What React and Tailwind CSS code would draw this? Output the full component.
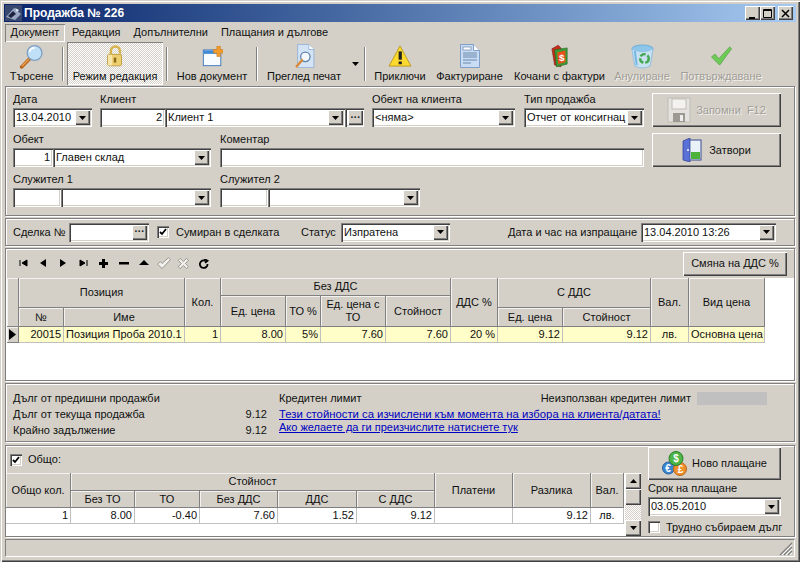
import React from "react";

const sunken = "bg-white shadow-[inset_1px_1px_0_#808080,inset_2px_2px_0_#404040,inset_-1px_-1px_0_#fff,inset_-2px_-2px_0_#d4d0c8]";
const raised = "bg-[#d4d0c8] shadow-[inset_1px_1px_0_#fff,inset_-1px_-1px_0_#404040,inset_-2px_-2px_0_#808080]";
const panel = "mx-[1px] border border-[#808080] shadow-[inset_1px_1px_0_#fff,1px_1px_0_#fff]";
const head = "flex items-center justify-center text-center leading-[13px] border-r border-b border-[#808080] shadow-[inset_1px_1px_0_#f4f2ee] bg-[#d4d0c8]";
const dither = "bg-[repeating-conic-gradient(#fff_0_25%,#d4d0c8_0_50%)] bg-[length:2px_2px]";

function Arrow() {
  return (
    <span className={`${raised} flex items-center justify-center shrink-0 w-[15px] h-[15px]`}>
      <svg width="7" height="4" viewBox="0 0 7 4"><path d="M0 0h7L3.500 4z" fill="#000" /></svg>
    </span>
  );
}

function Field({ w, text, right, arrow, dots, className = "" }) {
  return (
    <div className={`${sunken} h-[19px] flex items-center pl-[3px] pr-[2px] shrink-0 ${className}`} style={{ width: w }}>
      <span className={`flex-1 whitespace-nowrap overflow-hidden ${right ? "text-right pr-[1px]" : ""}`}>{text}</span>
      {arrow && <Arrow />}
      {dots && <span className={`${raised} w-[15px] h-[15px] flex items-center justify-center font-bold leading-[8px] text-[10px] shrink-0`}>···</span>}
    </div>
  );
}

function Label({ children }) {
  return <div className="h-[18px] leading-[18px] whitespace-nowrap">{children}</div>;
}

function Check({ on }) {
  return (
    <span className={`${sunken} w-[12px] h-[12px] flex items-center justify-center shrink-0`}>
      {on && <svg width="8" height="8" viewBox="0 0 8 8"><path d="M1 4l2 2 4-5" stroke="#000" strokeWidth="1.800" fill="none" /></svg>}
    </span>
  );
}

const Icons = {
  search: (
    <svg width="26" height="25" viewBox="0 0 30 28">
      <path d="M3 26l9-9" stroke="#b8651e" strokeWidth="4" strokeLinecap="round" />
      <path d="M3.500 25l8-8" stroke="#f3a653" strokeWidth="1.500" />
      <circle cx="18" cy="10" r="8.500" fill="#bfe0f7" stroke="#7f9fc2" strokeWidth="1.500" />
      <path d="M12 9a6 6 0 0 1 6-5" stroke="#fff" strokeWidth="2" fill="none" />
    </svg>
  ),
  lock: (
    <svg width="18" height="22" viewBox="0 0 22 26">
      <path d="M6 13V7a5.500 5.500 0 0 1 11 0v3" stroke="#d8b24a" strokeWidth="3" fill="none" />
      <rect x="2" y="11" width="17" height="14" rx="2" fill="#efce6e" stroke="#b8953a" />
      <rect x="2.500" y="11.500" width="5" height="13" fill="#f8e6a8" />
      <rect x="9.500" y="15" width="3" height="6" fill="#8a6a1c" />
    </svg>
  ),
  doc: (
    <svg width="21" height="21" viewBox="0 0 24 24">
      <rect x="1.500" y="4.500" width="20" height="18" fill="#f8fcff" stroke="#2f6fb5" />
      <rect x="2" y="5" width="19" height="4" fill="#3f8ad6" />
      <path d="M13 4h4V0h4v4h3v4h-3v4h-4V8h-4z" fill="#f39c2c" stroke="#c9761a" strokeWidth=".6" />
    </svg>
  ),
  preview: (
    <svg width="21" height="24" viewBox="0 0 24 28">
      <path d="M4 .5h13l6 6v21H4z" fill="#d5e4f5" stroke="#8fb0d6" />
      <path d="M17 .5v6h6" fill="#fff" stroke="#8fb0d6" />
      <circle cx="13" cy="15" r="5.500" fill="#f2f8fe" stroke="#5d83ac" strokeWidth="1.500" />
      <path d="M9 19l-6 7" stroke="#d98a3a" strokeWidth="3" strokeLinecap="round" />
    </svg>
  ),
  warn: (
    <svg width="24" height="22" viewBox="0 0 26 24">
      <path d="M13 1L25 23H1z" fill="#fbd92e" stroke="#b99a1c" strokeLinejoin="round" />
      <rect x="11.500" y="7" width="3.500" height="9" fill="#222" />
      <rect x="11.500" y="18" width="3.500" height="3" fill="#222" />
    </svg>
  ),
  invoice: (
    <svg width="20" height="24" viewBox="0 0 20 24">
      <path d="M.5.5h13l6 6v17H.5z" fill="#c8dcf3" stroke="#7f9fc8" />
      <path d="M13.500.5v6h6" fill="#fff" stroke="#7f9fc8" />
      <rect x="3" y="3" width="8" height="3" fill="#fff" stroke="#54739c" strokeWidth=".6" />
      <path d="M3 9h14M3 11h14M3 13h14M3 16h14M3 19h8" stroke="#54739c" strokeWidth=".8" />
    </svg>
  ),
  books: (
    <svg width="18" height="24" viewBox="0 0 20 26">
      <path d="M1 5l7-4 3 3v21l-7-2z" fill="#c92b1c" stroke="#6d150c" strokeWidth=".6" />
      <path d="M4 6l14-2v18L6 25z" fill="#3c9a35" stroke="#1d5a1a" strokeWidth=".6" />
      <path d="M7 9l9-2v13l-8 2z" fill="#e6511c" />
      <text x="12" y="19" fontSize="11" fontWeight="700" fill="#fff" textAnchor="middle" fontFamily="Liberation Sans">$</text>
    </svg>
  ),
  bin: (
    <svg width="23" height="25" viewBox="0 0 24 26">
      <ellipse cx="12" cy="5" rx="11" ry="4" fill="#7cc4f2" stroke="#4ea3e0" />
      <path d="M1 5l3 18q8 4 16 0l3-18q-11 6-22 0z" fill="#c4e6fa" stroke="#7cbcea" />
      <path d="M4 7l2 15" stroke="#5cb0ec" strokeWidth="2" />
      <circle cx="14" cy="15" r="4.500" fill="none" stroke="#1f9e30" strokeWidth="2.500" strokeDasharray="6 2" />
    </svg>
  ),
  ok: (
    <svg width="23" height="20" viewBox="0 0 24 22">
      <path d="M1 12l4-3 4 5L21 1l2 2L10 21z" fill="#55cc3a" stroke="#2e9420" strokeWidth=".8" strokeLinejoin="round" />
    </svg>
  ),
  floppy: (
    <svg width="24" height="26" viewBox="0 0 24 26">
      <path d="M1 1h22v24H1z" fill="#e4e2de" stroke="#c0bdb6" />
      <rect x="5" y="2" width="14" height="10" fill="#f3f2f0" stroke="#c0bdb6" />
      <rect x="6" y="16" width="12" height="9" fill="#9d9a94" />
      <rect x="13" y="18" width="3" height="6" fill="#eee" />
    </svg>
  ),
  door: (
    <svg width="20" height="24" viewBox="0 0 20 24">
      <rect x="6" y="2" width="13" height="20" fill="#e8f2f8" stroke="#3a4a8f" />
      <rect x="9" y="14" width="9" height="7" fill="#4cb23a" />
      <path d="M1 3l7-3v24l-7-2z" fill="#5a72d8" stroke="#2c3a8e" strokeWidth=".7" />
      <circle cx="6" cy="12" r="1" fill="#fff" />
    </svg>
  ),
  coins: (
    <svg width="25" height="25" viewBox="0 0 25 25" fontFamily="Liberation Sans" fontWeight="700" fontSize="10" textAnchor="middle">
      <circle cx="6.500" cy="17" r="6" fill="#3c86d0" stroke="#2a5fa0" />
      <text x="6" y="21" fill="#fff">€</text>
      <circle cx="18" cy="18" r="6.500" fill="#f0902c" stroke="#b7651a" />
      <text x="18.500" y="22" fill="#fff">£</text>
      <circle cx="14" cy="7.500" r="7" fill="#4db548" stroke="#2a7f2a" />
      <text x="14" y="11" fill="#fff">$</text>
    </svg>
  ),
};

function Tool({ w, icon, text, disabled, pressed }) {
  return (
    <div
      className={`shrink-0 flex flex-col items-center justify-end h-[43px] pb-[2px] ${disabled ? "text-[#a09d96] [text-shadow:1px_1px_0_#f4f2ee]" : ""} ${pressed ? `shadow-[inset_1px_1px_0_#808080,inset_-1px_-1px_0_#fff] ${dither}` : ""}`}
      style={{ width: w }}
    >
      <div className={`h-[28px] flex items-center justify-center ${disabled ? "opacity-80" : ""}`}>{icon}</div>
      <span className="leading-[13px] whitespace-nowrap">{text}</span>
    </div>
  );
}

function Sep() {
  return <div className="shrink-0 w-[2px] h-[34px] bg-[#808080] border-r border-white self-center" />;
}

const nav = [
  <path d="M1 1v6M8 1v6L3 4z" stroke="#000" fill="#000" />,
  <path d="M7 0v8L1 4z" fill="#000" />,
  <path d="M1 0v8l6-4z" fill="#000" />,
  <path d="M1 1v6l5-3zM8 1v6" stroke="#000" fill="#000" />,
  <path d="M3 0h3v3h3v3H6v3H3V6H0V3h3z" fill="#000" />,
  <path d="M0 3h10v2.500H0z" fill="#000" />,
  <path d="M5 1l5 5H0z" fill="#000" />,
  <path d="M.5 5.500l2-2 1.500 1.500L9 .5l1.500 1.500L4 9z" stroke="#8f8c85" strokeWidth=".7" fill="#f4f2ee" />,
  <path d="M1 2.500L2.500 1 5 3.500 7.500 1 9 2.500 6.500 5 9 7.500 7.500 9 5 6.500 2.500 9 1 7.500 3.500 5z" stroke="#8f8c85" strokeWidth=".7" fill="#f4f2ee" />,
  <path d="M8.500 5A3.800 3.800 0 1 1 6.500 1.800M5.500 0l3 1.800-2.500 2" stroke="#000" strokeWidth="1.800" fill="none" />,
];

function Cell({ children, right, center, className = "" }) {
  return (
    <div className={`border-r border-b border-[#c0c0c0] flex items-center whitespace-nowrap overflow-hidden px-[2px] ${right ? "justify-end" : center ? "justify-center" : ""} ${className}`}>
      {children}
    </div>
  );
}

export default function App() {
  const rowBg = "bg-[#fffdc8]";
  return (
    <div className="w-[800px] h-[562px] overflow-hidden bg-[#d4d0c8] p-[4px] flex flex-col text-[11px] text-[#101010] shadow-[inset_1px_1px_0_#d4d0c8,inset_2px_2px_0_#fff,inset_-1px_-1px_0_#404040,inset_-2px_-2px_0_#808080] font-['Liberation_Sans',sans-serif]">
      {/* title */}
      <div className="h-[18px] shrink-0 flex items-center bg-gradient-to-r from-[#0a246a] to-[#a6caf0] pl-[1px] pr-[3px]">
        <svg width="17" height="16" viewBox="0 0 17 16" className="shrink-0">
          <rect width="17" height="16" fill="#39466e" />
          <path d="M1 12L9 3l7 6-6 6z" fill="#9aa7c4" />
          <path d="M3 11l5-5 3 3-5 4z" fill="#1e2440" />
          <path d="M10 3l4 2-2 2z" fill="#e8edf5" />
        </svg>
        <span className="ml-[2px] text-white font-bold text-[12px] whitespace-nowrap">Продажба № 226</span>
        <div className="ml-auto flex">
          {[
            <path d="M2 9h6v2H2z" fill="#000" />,
            <path d="M1.500 1.500h8v8h-8zM1 2.500h9" stroke="#000" fill="none" />,
            <path d="M2 2l7 7M9 2l-7 7" stroke="#000" strokeWidth="1.500" />,
          ].map((p, i) => (
            <span key={i} className={`${raised} w-[15px] h-[14px] flex items-center justify-center ${i === 2 ? "ml-[3px]" : ""}`}>
              <svg width="11" height="11" viewBox="0 0 11 11">{p}</svg>
            </span>
          ))}
        </div>
      </div>
      {/* menu */}
      <div className="h-[19px] mt-[1px] shrink-0 flex items-center pl-[1px]">
        <span className="h-[18px] w-[60px] flex items-center justify-center shadow-[inset_1px_1px_0_#808080,inset_-1px_-1px_0_#fff]">Документ</span>
        <span className="ml-[7px]">Редакция</span>
        <span className="ml-[13px]">Допълнителни</span>
        <span className="ml-[13px]">Плащания и дългове</span>
      </div>
      {/* toolbar */}
      <div className="h-[43px] shrink-0 flex items-center pl-[4px]">
        <Tool w={47} icon={Icons.search} text="Търсене" />
        <div className="w-[7px]" /><Sep /><div className="w-[3px]" />
        <Tool w={96} icon={Icons.lock} text="Режим редакция" pressed />
        <div className="w-[3px]" /><Sep /><div className="w-[8px]" />
        <Tool w={72} icon={Icons.doc} text="Нов документ" />
        <div className="w-[8px]" /><Sep /><div className="w-[8px]" />
        <Tool w={76} icon={Icons.preview} text="Преглед печат" />
        <span className="ml-[9px] mt-[1px] w-[8px] flex justify-center shrink-0">
          <svg width="7" height="4" viewBox="0 0 7 4"><path d="M0 0h7L3.500 4z" fill="#000" /></svg>
        </span>
        <div className="w-[5px]" /><Sep /><div className="w-[6px]" />
        <Tool w={56} icon={Icons.warn} text="Приключи" />
        <div className="w-[6px]" />
        <Tool w={71} icon={Icons.invoice} text="Фактуриране" />
        <div className="w-[8px]" />
        <Tool w={93} icon={Icons.books} text="Кочани с фактури" />
        <div className="w-[8px]" />
        <Tool w={56} icon={Icons.bin} text="Анулиране" disabled />
        <div className="w-[9px]" />
        <Tool w={84} icon={Icons.ok} text="Потвърждаване" disabled />
      </div>
      {/* form */}
      <div className={`${panel} mt-[1px] h-[130px] shrink-0 flex pl-[7px] pt-[3px]`}>
        <div className="w-[631px] shrink-0 flex flex-col gap-[3px]">
          <div className="flex">
            <div><Label>Дата</Label><Field w={79} text="13.04.2010" arrow /></div>
            <div className="ml-[8px]">
              <Label>Клиент</Label>
              <div className="flex">
                <Field w={65} text="2" right />
                <Field w={180} text="Клиент 1" arrow />
                <Field w={19} dots className="pl-[2px]" />
              </div>
            </div>
            <div className="ml-[8px]"><Label>Обект на клиента</Label><Field w={143} text="<няма>" arrow /></div>
            <div className="ml-[9px]"><Label>Тип продажба</Label><Field w={120} text="Отчет от консигнац" arrow /></div>
          </div>
          <div className="flex">
            <div>
              <Label>Обект</Label>
              <div className="flex"><Field w={40} text="1" right /><Field w={158} text="Главен склад" arrow /></div>
            </div>
            <div className="ml-[9px]"><Label>Коментар</Label><Field w={424} text="" /></div>
          </div>
          <div className="flex">
            <div>
              <Label>Служител 1</Label>
              <div className="flex"><Field w={48} text="" /><Field w={150} text="" arrow /></div>
            </div>
            <div className="ml-[9px]">
              <Label>Служител 2</Label>
              <div className="flex"><Field w={48} text="" /><Field w={152} text="" arrow /></div>
            </div>
          </div>
        </div>
        <div className="ml-[8px] pt-[3px] flex flex-col gap-[6px]">
          <div className={`${raised} w-[129px] h-[34px] flex items-center justify-center gap-[5px] text-[#a09d96] [text-shadow:1px_1px_0_#f4f2ee]`}>
            {Icons.floppy}<span>Запомни&nbsp; F12</span>
          </div>
          <div className={`${raised} w-[129px] h-[34px] flex items-center justify-center gap-[7px]`}>
            {Icons.door}<span>Затвори</span>
          </div>
        </div>
      </div>
      {/* deal row */}
      <div className={`${panel} mt-[2px] h-[28px] shrink-0 flex items-center pl-[7px]`}>
        <span className="w-[56px] whitespace-nowrap">Сделка №</span>
        <Field w={80} text="" dots />
        <span className="ml-[8px]"><Check on /></span>
        <span className="ml-[7px] whitespace-nowrap w-[125px]">Сумиран в сделката</span>
        <span className="whitespace-nowrap w-[40px]">Статус</span>
        <Field w={109} text="Изпратена" arrow />
        <span className="ml-[58px] whitespace-nowrap w-[133px]">Дата и час на изпращане</span>
        <Field w={135} text="13.04.2010 13:26" arrow />
      </div>
      {/* grid panel */}
      <div className={`${panel} mt-[2px] h-[133px] shrink-0 flex flex-col`}>
        <div className="h-[29px] shrink-0 flex items-center pl-[8px] pr-[7px]">
          {nav.map((p, i) => (
            <span key={i} className="w-[20px] flex justify-center">
              {i === 7 || i === 8 ? (
                <svg width="14" height="13" viewBox="0 0 11 10">{p}</svg>
              ) : (
                <svg width="11" height="10" viewBox="0 0 11 10">{p}</svg>
              )}
            </span>
          ))}
          <span className={`${raised} ml-auto w-[104px] h-[24px] flex items-center justify-center whitespace-nowrap`}>Смяна на ДДС %</span>
        </div>
        <div className="flex-1 bg-white overflow-hidden">
          <div className="grid w-max grid-cols-[12px_45px_121px_36px_65px_35px_65px_65px_47px_65px_88px_38px_76px] grid-rows-[18px_12px_19px_16px] ml-[1px]">
            <div className={`${head} col-[1] row-[1/4]`} />
            <div className={`${head} col-[2/4] row-[1/3]`}>Позиция</div>
            <div className={`${head} col-[2] row-[3]`}>№</div>
            <div className={`${head} col-[3] row-[3]`}>Име</div>
            <div className={`${head} col-[4] row-[1/4]`}>Кол.</div>
            <div className={`${head} col-[5/9] row-[1]`}>Без ДДС</div>
            <div className={`${head} col-[5] row-[2/4]`}>Ед. цена</div>
            <div className={`${head} col-[6] row-[2/4]`}>ТО %</div>
            <div className={`${head} col-[7] row-[2/4]`}>Ед. цена с<br />ТО</div>
            <div className={`${head} col-[8] row-[2/4]`}>Стойност</div>
            <div className={`${head} col-[9] row-[1/4]`}>ДДС %</div>
            <div className={`${head} col-[10/12] row-[1/3]`}>С ДДС</div>
            <div className={`${head} col-[10] row-[3]`}>Ед. цена</div>
            <div className={`${head} col-[11] row-[3]`}>Стойност</div>
            <div className={`${head} col-[12] row-[1/4]`}>Вал.</div>
            <div className={`${head} col-[13] row-[1/4]`}>Вид цена</div>
            <div className={`${head} col-[1] row-[4]`}>
              <svg width="7" height="11" viewBox="0 0 7 11"><path d="M0 0l7 5.500L0 11z" fill="#000" /></svg>
            </div>
            <Cell right className={rowBg}>20015</Cell>
            <Cell className={rowBg}>Позиция Проба 2010.1</Cell>
            <Cell right className={rowBg}>1</Cell>
            <Cell right className={rowBg}>8.00</Cell>
            <Cell right className={rowBg}>5%</Cell>
            <Cell right className={rowBg}>7.60</Cell>
            <Cell right className={rowBg}>7.60</Cell>
            <Cell right className={rowBg}>20 %</Cell>
            <Cell right className={rowBg}>9.12</Cell>
            <Cell right className={rowBg}>9.12</Cell>
            <Cell center className={rowBg}>лв.</Cell>
            <Cell className={rowBg}>Основна цена</Cell>
          </div>
        </div>
      </div>
      {/* debt */}
      <div className={`${panel} mt-[2px] h-[59px] shrink-0 flex pl-[7px] pt-[6px]`}>
        <div className="w-[254px] shrink-0 grid grid-cols-[1fr_auto] auto-rows-[16px] items-center">
          <span>Дълг от предишни продажби</span><span />
          <span>Дълг от текуща продажба</span><span>9.12</span>
          <span>Крайно задължение</span><span>9.12</span>
        </div>
        <div className="ml-[12px] flex-1 flex flex-col">
          <div className="h-[16px] flex items-center">
            <span>Кредитен лимит</span>
            <span className="ml-auto whitespace-nowrap">Неизползван кредитен лимит</span>
            <span className="ml-[6px] mr-[27px] w-[70px] h-[13px] bg-[#c0c0c0]" />
          </div>
          <a className="h-[14px] leading-[14px] mt-[1px] text-[11.300px] text-[#0000c0] underline whitespace-nowrap">Тези стойности са изчислени към момента на избора на клиента/датата!</a>
          <a className="h-[13px] leading-[13px] text-[#0000c0] underline whitespace-nowrap">Ако желаете да ги преизчислите натиснете тук</a>
        </div>
      </div>
      {/* totals */}
      <div className={`${panel} mt-[3px] h-[92px] shrink-0 flex`}>
        <div className="w-[636px] shrink-0 flex flex-col">
          <div className="h-[27px] shrink-0 flex items-center pl-[4px]">
            <Check on />
            <span className="ml-[6px]">Общо:</span>
          </div>
          <div className="flex">
            <div className="w-[619px] h-[63px] bg-white shrink-0">
              <div className="grid grid-cols-[65px_64px_65px_78px_79px_78px_78px_78px_33px] grid-rows-[18px_17px_16px]">
                <div className={`${head} col-[1] row-[1/3]`}>Общо кол.</div>
                <div className={`${head} col-[2/7] row-[1]`}>Стойност</div>
                <div className={`${head} col-[2] row-[2]`}>Без ТО</div>
                <div className={`${head} col-[3] row-[2]`}>ТО</div>
                <div className={`${head} col-[4] row-[2]`}>Без ДДС</div>
                <div className={`${head} col-[5] row-[2]`}>ДДС</div>
                <div className={`${head} col-[6] row-[2]`}>С ДДС</div>
                <div className={`${head} col-[7] row-[1/3]`}>Платени</div>
                <div className={`${head} col-[8] row-[1/3]`}>Разлика</div>
                <div className={`${head} col-[9] row-[1/3]`}>Вал.</div>
                <Cell right>1</Cell>
                <Cell right>8.00</Cell>
                <Cell right>-0.40</Cell>
                <Cell right>7.60</Cell>
                <Cell right>1.52</Cell>
                <Cell right>9.12</Cell>
                <Cell />
                <Cell right>9.12</Cell>
                <Cell center>лв.</Cell>
              </div>
            </div>
            <div className={`w-[16px] h-[63px] shrink-0 flex flex-col ${dither}`}>
              <span className={`${raised} h-[16px] flex items-center justify-center`}>
                <svg width="7" height="4" viewBox="0 0 7 4"><path d="M3.500 0L7 4H0z" fill="#000" /></svg>
              </span>
              <span className={`${raised} h-[16px]`} />
              <span className={`${raised} h-[16px] mt-auto flex items-center justify-center`}>
                <svg width="7" height="4" viewBox="0 0 7 4"><path d="M0 0h7L3.500 4z" fill="#000" /></svg>
              </span>
            </div>
          </div>
        </div>
        <div className="ml-[6px] pt-[1px] flex flex-col">
          <div className={`${raised} w-[133px] h-[33px] flex items-center justify-center gap-[5px]`}>
            {Icons.coins}<span>Ново плащане</span>
          </div>
          <div className="h-[17px] leading-[17px] whitespace-nowrap">Срок на плащане</div>
          <Field w={133} text="03.05.2010" arrow />
          <div className="flex items-center mt-[3px]">
            <Check />
            <span className="ml-[6px] whitespace-nowrap">Трудно събираем дълг</span>
          </div>
        </div>
      </div>
      {/* status */}
      <div className="mt-[2px] mx-[1px] h-[18px] shrink-0 border border-[#808080] border-r-white border-b-white relative">
        <svg width="14" height="14" viewBox="0 0 14 14" className="absolute right-[1px] bottom-[0px]">
          <path d="M13 1L1 13M13 5L5 13M13 9l-4 4" stroke="#808080" strokeWidth="1.200" />
          <path d="M13 3L3 13M13 7l-6 6M13 11l-2 2" stroke="#fff" />
        </svg>
      </div>
    </div>
  );
}
